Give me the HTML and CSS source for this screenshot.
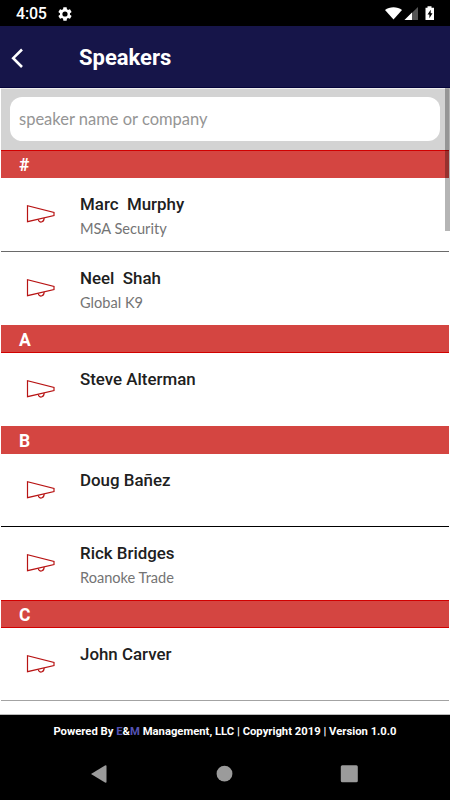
FILE: index.html
```
<!DOCTYPE html>
<html lang="en">
<head>
    <meta charset="UTF-8">
    <meta name="viewport" content="width=device-width, initial-scale=1.0">
    <title>Speakers</title>
    <link rel="stylesheet" href="styles.css">
</head>
<body>

    <svg class="defs" width="0" height="0">
        <symbol id="megaphone" viewBox="0 0 30 20">
            <path d="M1.5 1.7V17.7L28 11.5V8.5Z"/>
            <path d="M12.3 15.5C12.8 19.3 18.2 18.9 18.1 14.1"/>
        </symbol>
    </svg>

    <div class="status-bar">
        <span class="time">4:05</span>
        <svg class="gear" width="16" height="16" viewBox="0 0 24 24">
            <path d="M19.4 13c.1-.3.1-.6.1-1s0-.7-.1-1l2.2-1.7c.2-.1.2-.4.1-.6l-2-3.5c-.1-.2-.4-.3-.6-.2l-2.5 1c-.5-.4-1.1-.7-1.7-1l-.4-2.6c0-.2-.2-.4-.5-.4h-4c-.2 0-.5.2-.5.4L9.1 5c-.6.3-1.2.6-1.7 1L4.9 5c-.2-.1-.5 0-.6.2l-2 3.5c-.1.2-.1.5.1.6L4.5 11c0 .3-.1.7-.1 1s0 .7.1 1l-2.1 1.7c-.2.1-.3.4-.1.6l2 3.5c.1.2.4.3.6.2l2.5-1c.5.4 1.1.7 1.7 1l.4 2.6c0 .2.2.4.5.4h4c.2 0 .5-.2.5-.4l.4-2.6c.6-.3 1.2-.6 1.7-1l2.5 1c.2.1.5 0 .6-.2l2-3.5c.1-.2.1-.5-.1-.6z"/>
            <circle cx="12" cy="12" r="3.9" fill="#000"/>
        </svg>
        <svg class="signals" width="52" height="16" viewBox="0 0 52 16">
            <path d="M2 4C6.5 .2 14.500 .2 19 4L10.500 13.500Z"/>
            <path d="M21.500 14L35 1V14Z" fill="#555"/>
            <path d="M21.500 14L29 6.500V14Z"/>
            <path d="M42.500 1.700H44.500V0.200H48.500V1.700H51V14H42.500Z"/>
            <path d="M47.700 3.700L44.500 8.500H46.400V12.300L49.500 7.200H47.700Z" fill="#000"/>
        </svg>
    </div>

    <header class="header">
        <svg class="back" width="14" height="20" viewBox="0 0 14 20">
            <path d="M12 1.5L3.2 10.2L12 19"/>
        </svg>
        <h1>Speakers</h1>
    </header>

    <main class="content">
        <div class="search">
            <input type="text" placeholder="speaker name or company">
        </div>

        <div class="letter line-top">#</div>
        <div class="speaker tall">
            <svg class="icon"><use href="#megaphone"/></svg>
            <div class="info">
                <div class="name">Marc&nbsp; Murphy</div>
                <div class="company">MSA Security</div>
            </div>
        </div>
        <div class="speaker last">
            <svg class="icon"><use href="#megaphone"/></svg>
            <div class="info">
                <div class="name">Neel&nbsp; Shah</div>
                <div class="company">Global K9</div>
            </div>
        </div>

        <div class="letter line-bottom">A</div>
        <div class="speaker last">
            <svg class="icon"><use href="#megaphone"/></svg>
            <div class="info">
                <div class="name">Steve Alterman</div>
            </div>
        </div>

        <div class="letter">B</div>
        <div class="speaker dark">
            <svg class="icon"><use href="#megaphone"/></svg>
            <div class="info">
                <div class="name">Doug Bañez</div>
            </div>
        </div>
        <div class="speaker last">
            <svg class="icon"><use href="#megaphone"/></svg>
            <div class="info">
                <div class="name">Rick Bridges</div>
                <div class="company">Roanoke Trade</div>
            </div>
        </div>

        <div class="letter line-top line-bottom">C</div>
        <div class="speaker light">
            <svg class="icon"><use href="#megaphone"/></svg>
            <div class="info">
                <div class="name">John Carver</div>
            </div>
        </div>

        <div class="scrollbar"></div>
    </main>

    <footer class="footer">
        Powered By <span>E</span>&amp;<span>M</span> Management, LLC | Copyright 2019 | Version 1.0.0
    </footer>

    <nav class="nav-bar">
        <svg width="18" height="20" viewBox="0 0 18 20"><path d="M1 10L15 1.5Q16.500 1 16.500 2V18Q16.500 19 15 18.5Z"/></svg>
        <svg width="18" height="20" viewBox="0 0 18 20"><circle cx="9.5" cy="9.7" r="7.9"/></svg>
        <svg width="18" height="20" viewBox="0 0 18 20"><rect x="0.8" y="1.3" width="17" height="17" rx="1.5"/></svg>
    </nav>

</body>
</html>
```
FILE: styles.css
```
* {
    box-sizing: border-box;
}
body {
    margin: 0;
    height: 800px;
    display: flex;
    flex-direction: column;
    overflow: hidden;
    background: #000;
    font-family: Roboto, sans-serif;
}
.defs {
    position: absolute;
}
.status-bar {
    height: 26px;
    display: flex;
    align-items: center;
    padding: 1px 15px 0 16px;
    color: #fff;
    fill: #fff;
}
.time {
    width: 41px;
    font-size: 16px;
    font-weight: 500;
    letter-spacing: -0.2px;
}
.signals {
    margin-left: auto;
}
.header {
    height: 62px;
    display: flex;
    align-items: center;
    padding: 2px 10px 0;
    background: #161549;
    border-bottom: 1px solid #05043a;
}
.back {
    fill: none;
    stroke: #fff;
    stroke-width: 2.6;
}
.header h1 {
    margin: 0 0 0 55px;
    color: #fff;
    font-size: 22px;
    font-weight: 700;
}
.content {
    position: relative;
    height: 627px;
    padding: 0 1px;
    background: #fff;
    border-bottom: 1px solid #bbb;
}
.search {
    height: 62px;
    padding: 8px 9px 9px;
    background: #d3d3d3;
    border-top: 1px solid #eee;
}
.search input {
    display: block;
    width: 100%;
    height: 44px;
    padding: 0 9px;
    border: none;
    border-radius: 12px;
    background: #fff;
    font-family: Lato, sans-serif;
    font-size: 16.5px;
}
.search input::placeholder {
    color: #959595;
}
.letter {
    height: 28px;
    padding-left: 18px;
    background: #d44541;
    color: #fff;
    font-size: 17.5px;
    font-weight: 700;
    line-height: 30px;
}
.line-top {
    box-shadow: inset 0 1px #d10000;
}
.line-bottom {
    box-shadow: inset 0 -1px #d10000;
}
.line-top.line-bottom {
    box-shadow: inset 0 1px #d10000, inset 0 -1px #d10000;
}
.speaker {
    height: 73px;
    display: flex;
    padding: 16px 0 0 25px;
    border-bottom: 1px solid #6a6a6a;
}
.speaker.tall {
    height: 74px;
}
.speaker.last {
    border-bottom: none;
}
.speaker.dark {
    border-color: #000;
}
.speaker.light {
    border-color: #a3a3a3;
}
.icon {
    width: 30px;
    height: 20px;
    margin-top: 10px;
    fill: none;
    stroke: #b81414;
    stroke-width: 1.2;
}
.info {
    margin-left: 24px;
}
.name {
    color: #202020;
    font-size: 16.9px;
    font-weight: 500;
    line-height: 21px;
}
.company {
    margin-top: 4px;
    color: #747474;
    font-family: Lato, sans-serif;
    font-size: 14.6px;
    line-height: 20px;
}
.scrollbar {
    position: absolute;
    top: 0;
    right: 0;
    width: 5px;
    height: 143px;
    background: rgba(0, 0, 0, 0.29);
}
.footer {
    height: 33px;
    color: #fff;
    font-size: 11.28px;
    font-weight: 700;
    line-height: 34px;
    text-align: center;
}
.footer span {
    color: #5553b5;
}
.nav-bar {
    height: 52px;
    display: flex;
    align-items: center;
    justify-content: space-between;
    padding: 0 92px 0 90px;
    fill: #9b9b9b;
}
```
